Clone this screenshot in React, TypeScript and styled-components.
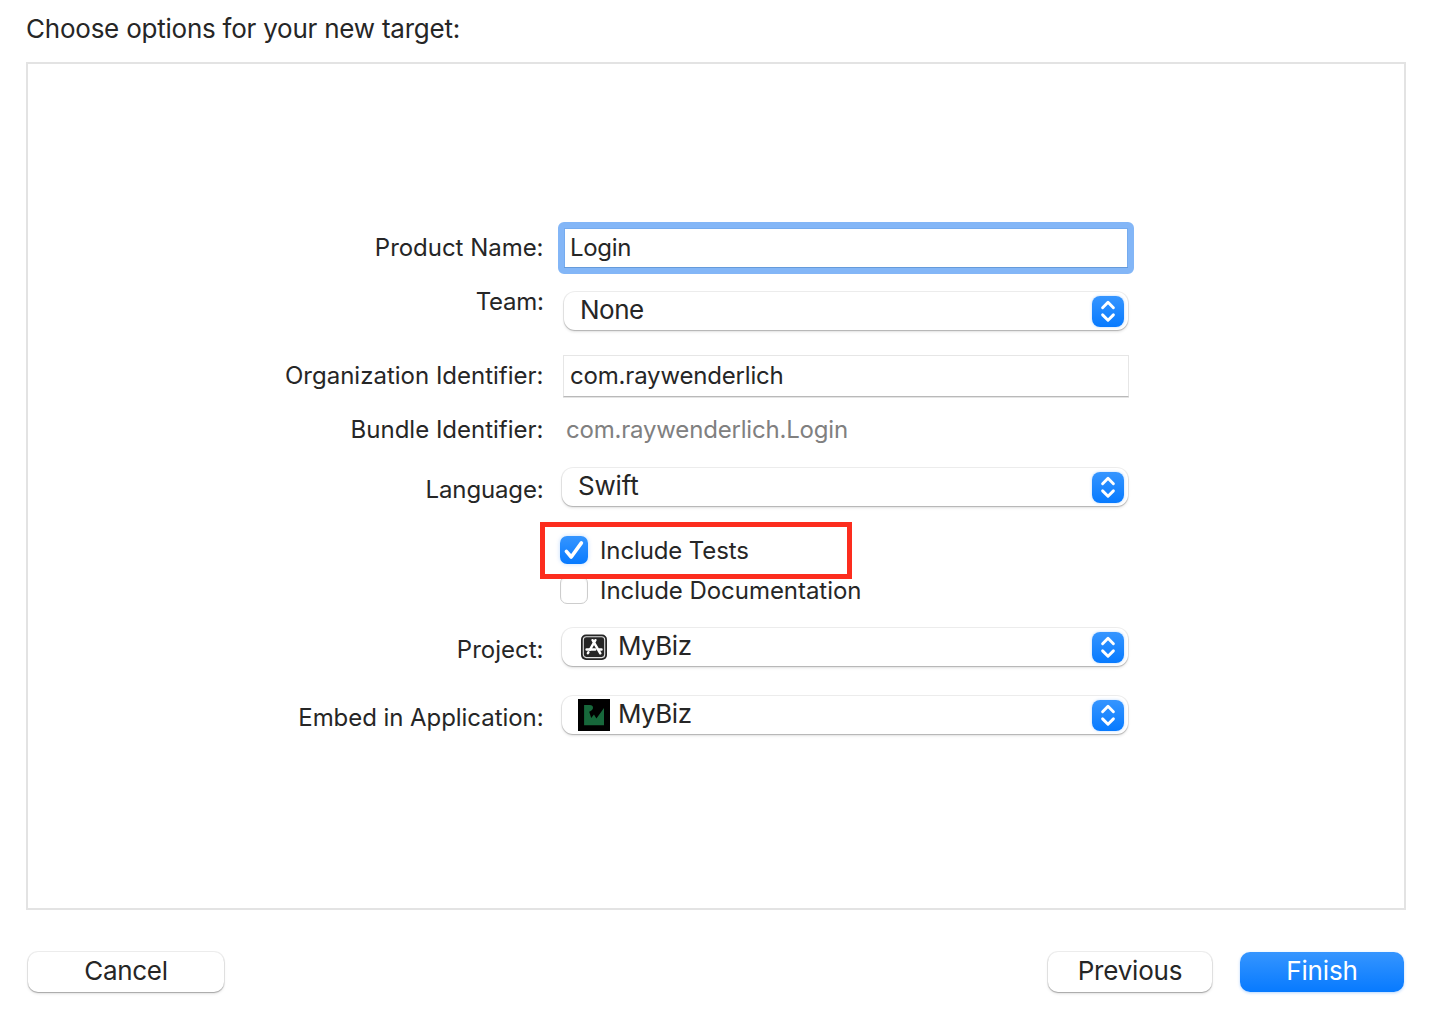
import React from "react";
import styled, { createGlobalStyle } from "styled-components";

const Global = createGlobalStyle`
  * { box-sizing: border-box; }
  body { margin: 0; background: #fff; }
  button { font: inherit; color: inherit; }
`;

const Sheet = styled.main`
  width: 1430px;
  height: 1014px;
  padding: 12px 24px 0 26px;
  overflow: hidden;
  display: flex;
  flex-direction: column;
  background: #fff;
  color: #262626;
  font: 26px/34px Inter, "Liberation Sans", sans-serif;
`;

const Text = styled.span<{ $ls?: number }>`
  white-space: pre;
  letter-spacing: ${(p) => p.$ls ?? 0}px;
`;

const Title = styled.h1`
  margin: 0 0 16px;
  font-size: 26px;
  line-height: 34px;
  font-weight: 400;
`;

const Panel = styled.section`
  width: 1380px;
  height: 848px;
  border: 2px solid #e3e3e3;
  padding-top: 164px;
  display: flex;
  flex-direction: column;
`;

const Row = styled.div<{ $gap?: number; $h: number }>`
  position: relative;
  display: grid;
  grid-template-columns: 516px 566px;
  grid-template-rows: 100%;
  column-gap: 19px;
  height: ${(p) => p.$h}px;
  margin-top: ${(p) => p.$gap ?? 0}px;
`;

const Label = styled.label<{ $shift: number }>`
  justify-self: end;
  margin-top: ${(p) => p.$shift}px;
  margin-right: 0.5px;
  height: 28px;
  font-size: 24px;
  line-height: 28px;
`;

const Field = styled.div`
  padding-left: 6px;
  display: flex;
  align-items: center;
  font-size: 24px;
  line-height: 28px;
  background: #fff;
  border: 1px solid #e6e6e6;
  border-bottom-color: #b9b9b9;
  box-shadow: 0 1px 0 #e4e4e4;
`;

const FocusedField = styled(Field)`
  margin: -6px -5px -5px;
  padding-left: 6px;
  border: 6px solid #83b6f7;
  border-radius: 6px;
  box-shadow: inset 0 -1px 0 #659ada, inset 0 0 0 1px #75abef;
`;

const Value = styled.div`
  padding-left: 3px;
  color: #808080;
  font-size: 24px;
  line-height: 28px;
`;

const PopUp = styled.div<{ $wide?: boolean }>`
  margin-left: ${(p) => (p.$wide ? -1 : 1)}px;
  margin-right: 1px;
  padding: 0 4px 0 16px;
  display: flex;
  align-items: center;
  border-radius: 11px;
  background: #fff;
  box-shadow: 0 0 0 1px rgba(0, 0, 0, 0.07), 0 1px 1px rgba(0, 0, 0, 0.16), 0 2px 3px rgba(0, 0, 0, 0.11);

  > span { flex: 1; margin-top: -2px; }
`;

const Stepper = styled.div`
  width: 32px;
  height: 31px;
  margin-top: 1px;
  border-radius: 8px;
  background: linear-gradient(#3595ff, #077aff);
  box-shadow: 0 0 3px rgba(10, 120, 255, 0.3);
  svg { display: block; }
`;

const IconSlot = styled.div`
  width: 32px;
  height: 32px;
  margin-right: 8px;
  svg { display: block; }
`;

const Check = styled.div<{ $on?: boolean }>`
  width: 28px;
  height: 28px;
  border-radius: 7px;
  background: ${(p) => (p.$on ? "linear-gradient(#3595ff, #077aff)" : "#fff")};
  border: ${(p) => (p.$on ? "0" : "1px solid #cdcdcd")};
  box-shadow: ${(p) => (p.$on ? "0 0 4px rgba(10, 120, 255, 0.25)" : "inset 0 1px 2px rgba(0,0,0,0.06)")};
  svg { display: block; }
`;

const CheckLine = styled.div`
  grid-column: 2;
  margin-left: -3px;
  display: flex;
  align-items: center;
  gap: 12px;
  font-size: 24px;
  line-height: 28px;
  > span { margin: 1px 0 -1px; }
`;

const Highlight = styled.div`
  position: absolute;
  z-index: 1;
  left: 512px;
  top: -14.5px;
  width: 311.5px;
  height: 57px;
  border: 5px solid #fc2d1e;
`;

const Footer = styled.footer`
  margin-top: 42px;
  padding: 0 2px;
  display: flex;
  gap: 28px;
`;

const Button = styled.button<{ $w: number; $primary?: boolean; $push?: boolean }>`
  width: ${(p) => p.$w}px;
  height: 40px;
  margin-right: ${(p) => (p.$push ? "auto" : "0")};
  padding: 0 0 2px;
  border: 0;
  border-radius: 10px;
  color: ${(p) => (p.$primary ? "#fff" : "#262626")};
  background: ${(p) => (p.$primary ? "linear-gradient(#3595ff, #077aff)" : "#fff")};
  box-shadow: ${(p) =>
    p.$primary
      ? "0 1px 3px rgba(10, 120, 255, 0.3)"
      : "0 0 0 1px rgba(0,0,0,0.07), 0 1px 1px rgba(0,0,0,0.22), 0 2px 3px rgba(0,0,0,0.1)"};
`;

const Arrows = () => (
  <Stepper>
    <svg width="32" height="31" viewBox="0 0 32 31" fill="none" stroke="#fff" strokeWidth="2.9" strokeLinecap="round" strokeLinejoin="round">
      <path d="M10.6 11.7 16 6.3l5.4 5.4M10.6 18.9l5.4 5.4 5.4-5.4" />
    </svg>
  </Stepper>
);

const ProjectIcon = () => (
  <svg width="32" height="32" viewBox="0 0 32 32" fill="none">
    <rect x="3" y="3.5" width="26" height="25.4" rx="5" fill="#262626" />
    <rect x="5.3" y="5.8" width="21.4" height="20.8" rx="3" stroke="#e2e2e2" strokeWidth="1.1" />
    <g stroke="#fff" strokeWidth="2.5" strokeLinecap="round">
      <path d="M14.6 9.2 22.3 22.3M17.4 9.2 12 18.6M10.4 21.4l-.5.8" />
      <path d="M8.6 18.6h8.6M21.2 18.6h2.3" />
    </g>
  </svg>
);

const AppIcon = () => (
  <svg width="32" height="32" viewBox="0 0 32 32">
    <path fill="#000" d="M0 0h32v32H0z" />
    <path fill="#17683b" d="M6.1 6.1h5.6c2.2 0 3.3 1 3.3 2.6 0 1.7-1.5 3-3.8 4L13.2 19l2.8-3.4 2.4 4L26 9v17.2H6.1z" />
  </svg>
);

export default function App() {
  return (
    <>
      <Global />
      <Sheet>
        <Title><Text $ls={-0.23}>Choose options for your new target:</Text></Title>
        <Panel>
          <Row $h={41}>
            <Label $shift={6}><Text $ls={-0.03}>Product Name:</Text></Label>
            <FocusedField><Text $ls={-0.3}>Login</Text></FocusedField>
          </Row>
          <Row $gap={23} $h={38}>
            <Label $shift={-4}><Text $ls={-0.3}>Team:</Text></Label>
            <PopUp><Text $ls={-0.5}>None</Text><Arrows /></PopUp>
          </Row>
          <Row $gap={25} $h={42}>
            <Label $shift={7}><Text>Organization Identifier:</Text></Label>
            <Field><Text $ls={-0.18}>com.raywenderlich</Text></Field>
          </Row>
          <Row $gap={19} $h={28}>
            <Label $shift={0}><Text>Bundle Identifier:</Text></Label>
            <Value><Text $ls={-0.19}>com.raywenderlich.Login</Text></Value>
          </Row>
          <Row $gap={24} $h={38}>
            <Label $shift={8}><Text $ls={-0.15}>Language:</Text></Label>
            <PopUp $wide><Text $ls={-0.2}>Swift</Text><Arrows /></PopUp>
          </Row>
          <Row $gap={30} $h={28}>
            <CheckLine>
              <Check $on>
                <svg width="28" height="28" viewBox="0 0 28 28" fill="none" stroke="#fff" strokeWidth="3.6" strokeLinecap="round" strokeLinejoin="round">
                  <path d="m6.4 15.4 4.8 5.6L21.4 6.9" />
                </svg>
              </Check>
              <Text $ls={-0.12}>Include Tests</Text>
            </CheckLine>
            <Highlight />
          </Row>
          <Row $gap={12} $h={28}>
            <CheckLine><Check /><Text $ls={-0.04}>Include Documentation</Text></CheckLine>
          </Row>
          <Row $gap={24} $h={38}>
            <Label $shift={8}><Text>Project:</Text></Label>
            <PopUp $wide><IconSlot><ProjectIcon /></IconSlot><Text $ls={-0.5}>MyBiz</Text><Arrows /></PopUp>
          </Row>
          <Row $gap={30} $h={38}>
            <Label $shift={8}><Text $ls={-0.06}>Embed in Application:</Text></Label>
            <PopUp $wide><IconSlot><AppIcon /></IconSlot><Text $ls={-0.5}>MyBiz</Text><Arrows /></PopUp>
          </Row>
        </Panel>
        <Footer>
          <Button $w={196} $push><Text $ls={-0.3}>Cancel</Text></Button>
          <Button $w={164}><Text $ls={-0.2}>Previous</Text></Button>
          <Button $w={164} $primary><Text $ls={-0.15}>Finish</Text></Button>
        </Footer>
      </Sheet>
    </>
  );
}
